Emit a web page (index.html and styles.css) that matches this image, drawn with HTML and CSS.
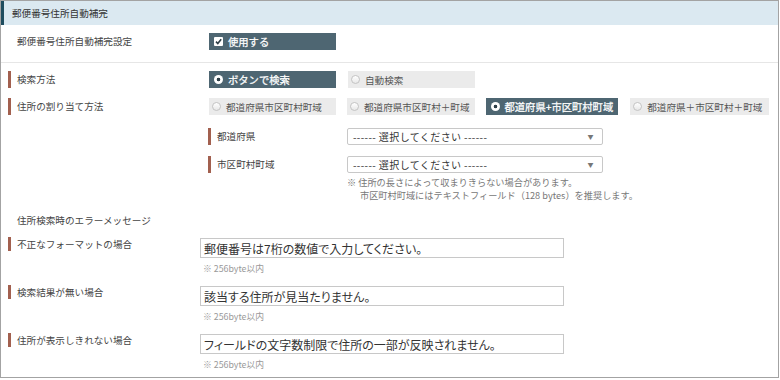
FILE: index.html
```html
<!DOCTYPE html>
<html lang='ja'>
<head>
<meta charset='UTF-8'>
<title>郵便番号住所自動補完</title>
<link rel="stylesheet" href="styles.css">
</head>
<body>
  <div class='panel'>
    <div class='panel-head'>郵便番号住所自動補完</div>

    <!-- ---------- 設定 ---------- -->
    <section class='sec sec-top'>
      <div class='row'>
        <div class='lbl plain'>郵便番号住所自動補完設定</div>
        <div class='opts'>
          <span class='opt on'>
            <svg class='chk' viewBox='0 0 9 9'><rect width='9' height='9' rx='1' fill='#fff'/><path d='M2 4.6 L3.8 6.5 L7.2 2.3' fill='none' stroke='#2e3f48' stroke-width='1.6'/></svg>
            使用する
          </span>
        </div>
      </div>
    </section>

    <section class='sec'>
      <div class='row'>
        <div class='lbl'>検索方法</div>
        <div class='opts'>
          <span class='opt on'><i class='radio'></i>ボタンで検索</span>
          <span class='opt'><i class='radio'></i>自動検索</span>
        </div>
      </div>
      <div class='row'>
        <div class='lbl'>住所の割り当て方法</div>
        <div class='opts'>
          <span class='opt'><i class='radio'></i>都道府県市区町村町域</span>
          <span class='opt'><i class='radio'></i>都道府県市区町村＋町域</span>
          <span class='opt on'><i class='radio'></i>都道府県+市区町村町域</span>
          <span class='opt'><i class='radio'></i>都道府県＋市区町村＋町域</span>
        </div>
      </div>

      <div class='sub'>
        <div class='sub-row'>
          <div class='sub-lbl'>都道府県</div>
          <div class='sel'><span>------ 選択してください ------</span><span class='arrow'>▼</span></div>
        </div>
        <div class='sub-row'>
          <div class='sub-lbl'>市区町村町域</div>
          <div class='sel'><span>------ 選択してください ------</span><span class='arrow'>▼</span></div>
        </div>
        <p class='sub-note'>※ 住所の長さによって収まりきらない場合があります。<br>市区町村町域にはテキストフィールド（128 bytes）を推奨します。</p>
      </div>

      <h3 class='sub-head'>住所検索時のエラーメッセージ</h3>

      <div class='err-row'>
        <div class='lbl'>不正なフォーマットの場合</div>
        <div class='err-field'>
          <input type='text' class='inp' value='郵便番号は7桁の数値で入力してください。'>
          <small class='hint'>※ 256byte以内</small>
        </div>
      </div>
      <div class='err-row'>
        <div class='lbl'>検索結果が無い場合</div>
        <div class='err-field'>
          <input type='text' class='inp' value='該当する住所が見当たりません。'>
          <small class='hint'>※ 256byte以内</small>
        </div>
      </div>
      <div class='err-row'>
        <div class='lbl'>住所が表示しきれない場合</div>
        <div class='err-field'>
          <input type='text' class='inp' value='フィールドの文字数制限で住所の一部が反映されません。'>
          <small class='hint'>※ 256byte以内</small>
        </div>
      </div>
    </section>
  </div>
</body>
</html>
```

FILE: styles.css
```css
/* ---------- BASE ---------- */
:root{
  --text:#444;
  --slate:#4e6672;
  --chip:#ebebeb;
  --mark:#a2604f;
  --line:#c8c8c8;
}
*{box-sizing:border-box;margin:0;padding:0;}
body{
  font-family:"Noto Sans CJK JP","Noto Sans",sans-serif;
  color:var(--text);background:#fff;font-size:9.6px;
}
.panel{
  width:779px;height:378px;border:1px solid #a3a3a3;overflow:hidden;
}
.panel-head{
  height:24px;line-height:24px;background:#dbe9f1;
  border-left:3px solid #1f4d5f;padding-left:8px;color:#333;
}
/* ---------- ROWS ---------- */
.sec{padding-top:8px;display:flex;flex-direction:column;}
.sec-top{padding-bottom:12px;border-bottom:1px solid #e6e6e6;}
.row{display:flex;align-items:stretch;height:17px;margin-bottom:10px;}
.sec-top .row{margin-bottom:0;}
.lbl{
  width:201px;margin-left:7px;padding-left:6px;
  border-left:3px solid var(--mark);line-height:17px;flex:none;
}
.lbl.plain{border-left-color:transparent;}
.opts{display:flex;gap:11px;}
.opt{
  min-width:127px;height:17px;display:flex;align-items:center;gap:5px;
  padding:0 5px 0 3px;background:var(--chip);color:#555;white-space:nowrap;
}
.opt.on{background:var(--slate);color:#fff;font-size:10.3px;padding-left:5px;-webkit-text-stroke:0.25px #fff;}
.opts .opt:last-child:not(.on){margin-left:1px;padding-right:7px;}
.chk{width:9px;height:9px;flex:none;}
.radio{
  width:9px;height:9px;border-radius:50%;flex:none;
  border:1px solid #c4c4c4;background:linear-gradient(#fff,#e8e8e8);
}
.opt.on .radio{border:none;background:radial-gradient(circle,#2e3f48 0 1.6px,#fff 2.1px);}
/* ---------- SUB SELECTS ---------- */
.sub{margin:3px 0 0 207px;display:flex;flex-direction:column;gap:11px;}
.sub-row{display:flex;align-items:center;height:17px;}
.sub-lbl{width:139px;line-height:17px;padding-left:6px;border-left:3px solid var(--mark);}
.sel{
  width:256px;height:17px;border:1px solid var(--line);border-radius:2px;
  display:flex;justify-content:space-between;align-items:center;
  padding:0 8px 0 5px;color:#333;font-size:10px;letter-spacing:.4px;
}
.arrow{font-size:6px;color:#777;}
.sub-note{
  margin:-8px 0 0 139px;padding-left:13px;text-indent:-13px;
  line-height:13px;color:#777;font-size:9.2px;
}
.sub-head{font-size:9.6px;font-weight:normal;line-height:14px;padding-left:16px;margin:11px 0 11px;}
/* ---------- ERROR MESSAGES ---------- */
.err-row{display:flex;align-items:flex-start;margin-bottom:11px;}
.err-row .lbl{width:192px;line-height:14px;margin-top:-1px;}
.err-field{display:flex;flex-direction:column;}
.inp{
  width:364px;height:20px;border:1px solid var(--line);padding:0 3px;
  font-family:inherit;font-size:12px;color:#333;font-feature-settings:"palt";outline:none;
}
.hint{margin-top:5px;padding-left:3px;line-height:12px;font-size:8.8px;color:#999;}
```
